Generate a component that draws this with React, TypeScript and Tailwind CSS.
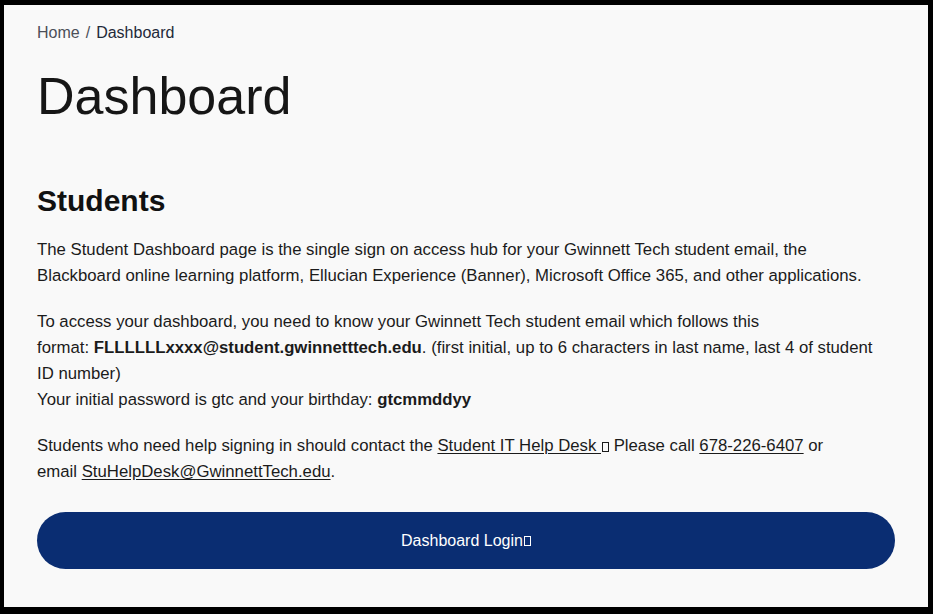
import React from 'react';

function Tofu() {
  return <span className="inline-block w-[7px] h-[10px] border border-current align-[-1px] ml-[1px]" />;
}

export default function App() {
  return (
    <div className="h-[614px] w-[933px] box-border border-black border-t-[5px] border-l-[4px] border-r-[5px] border-b-[7px] bg-[#f9f9f9] text-[#1b1b1b] font-['Liberation_Sans',Arial,sans-serif] overflow-hidden">
      <div className="px-[33px] pt-[16px]">
        {/* Breadcrumb */}
        <nav className="flex items-center gap-[6px] text-[16px] leading-[24px]">
          <span className="text-[#4b4f58]">Home</span>
          <span className="text-[#4b4f58]">/</span>
          <span className="text-[#1f2a3a]">Dashboard</span>
        </nav>

        <h1 className="mt-[20px] text-[52px] leading-[62px] font-normal text-[#161616]">Dashboard</h1>

        <h2 className="mt-[56px] text-[30px] leading-[36px] font-bold text-[#111]">Students</h2>

        <div className="mt-[18px] text-[16.75px] leading-[26px] space-y-[20px] whitespace-nowrap">
          <p>
            The Student Dashboard page is the single sign on access hub for your Gwinnett Tech student email, the
            <br />
            Blackboard online learning platform, Ellucian Experience (Banner), Microsoft Office 365, and other applications.
          </p>
          <p>
            To access your dashboard, you need to know your Gwinnett Tech student email which follows this
            <br />
            format: <strong>FLLLLLLxxxx@student.gwinnetttech.edu</strong>. (first initial, up to 6 characters in last name, last 4 of student
            <br />
            ID number)
            <br />
            Your initial password is gtc and your birthday: <strong>gtcmmddyy</strong>
          </p>
          <p>
            Students who need help signing in should contact the{' '}
            <a className="underline underline-offset-[2px]">Student IT Help Desk <Tofu /></a> Please call{' '}
            <a className="underline underline-offset-[2px]">678-226-6407</a> or
            <br />
            email <a className="underline underline-offset-[2px]">StuHelpDesk@GwinnettTech.edu</a>.
          </p>
        </div>

        <button className="mt-[27px] w-full h-[57px] rounded-full bg-[#0a2d72] text-white text-[16px] flex items-center justify-center">
          Dashboard Login<Tofu />
        </button>
      </div>
    </div>
  );
}
